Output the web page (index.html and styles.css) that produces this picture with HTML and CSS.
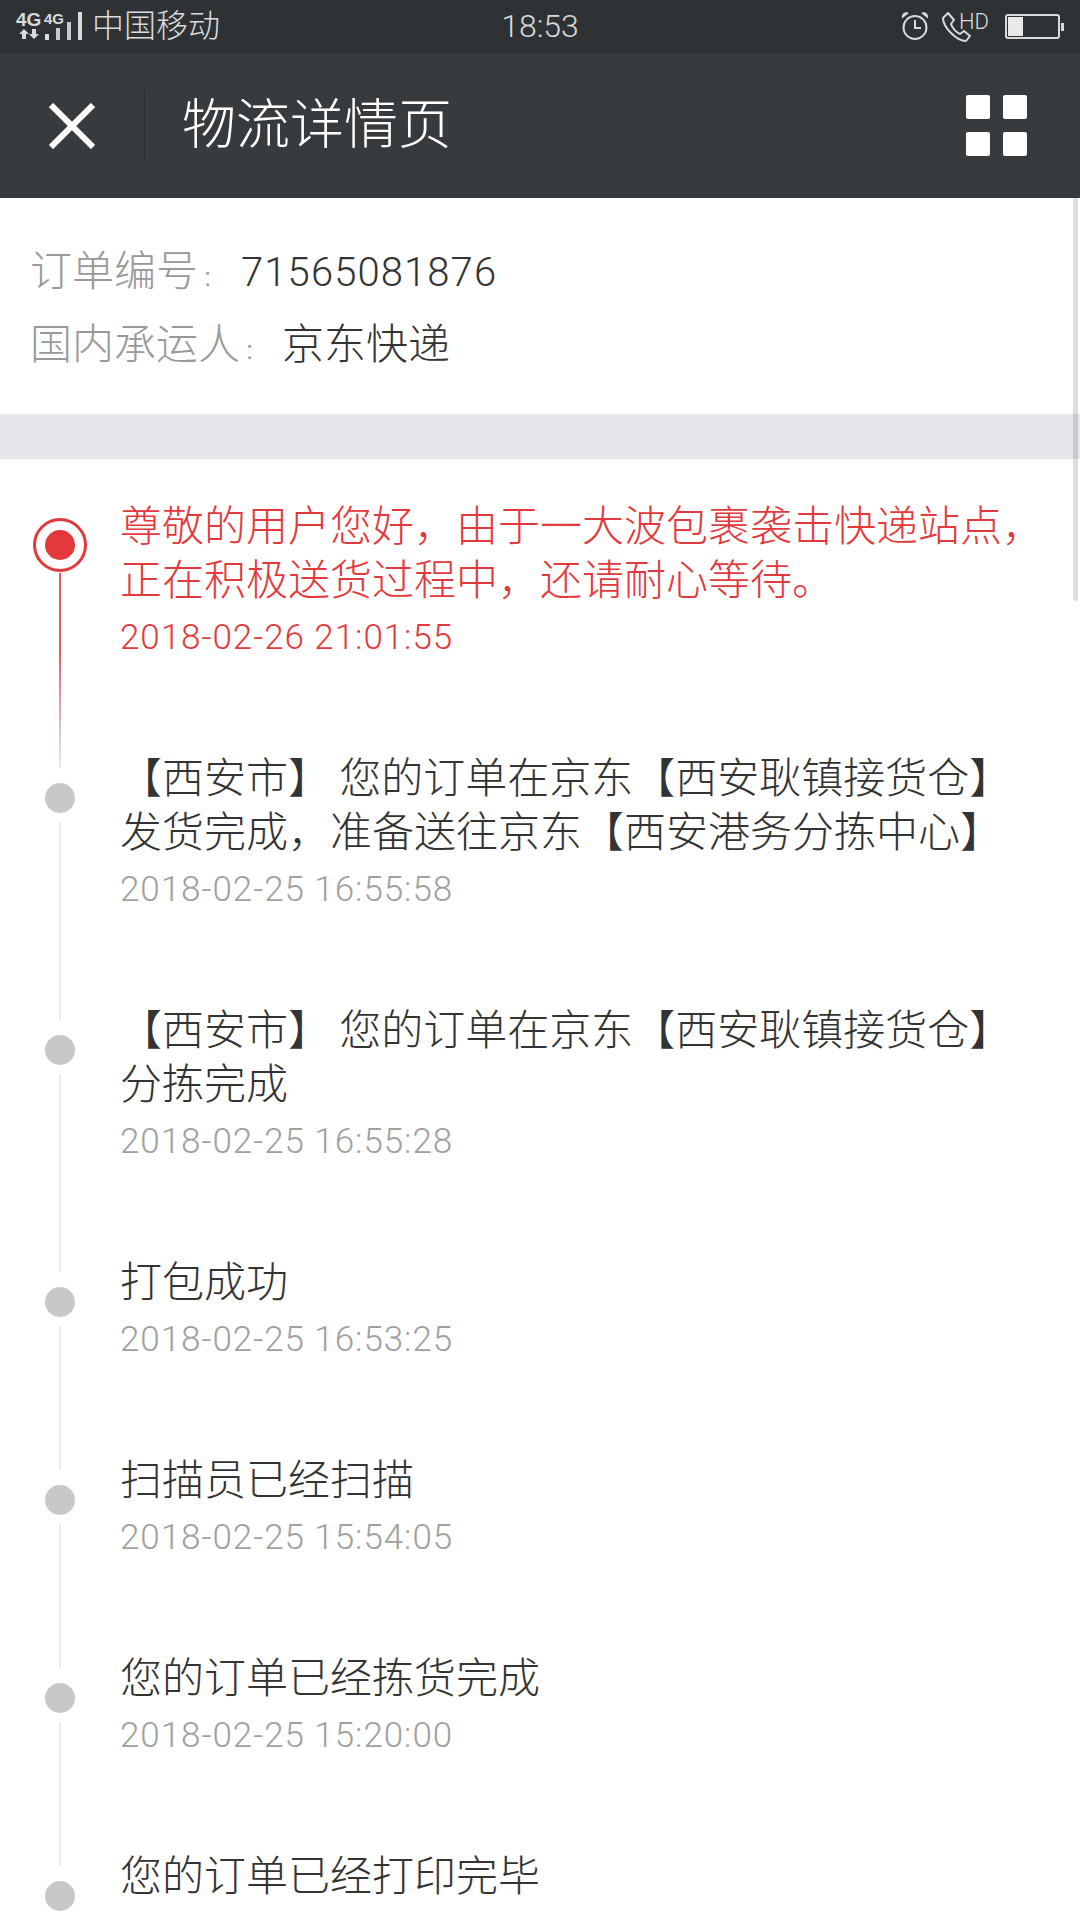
FILE: index.html
```html
<!DOCTYPE html>
<html lang="zh-CN">
<head>
<meta charset="utf-8">
<title>物流详情页</title>
<link rel="stylesheet" href="styles.css">
</head>
<body>
<div class="page">
  <header class="status">
    <div class="status-left">
      <div class="net">
        <span class="net-big">4G</span>
        <svg class="net-arrows" width="20" height="10" viewBox="0 0 20 10"><path d="M5 0l5 5H7v5H3V5H0zM15 10l-5-5h3V0h4v5h3z" fill="#d8dadc"/></svg>
      </div>
      <span class="net-small">4G</span>
      <div class="bars">
        <i class="bar bar-1"></i><i class="bar bar-2"></i><i class="bar bar-3"></i><i class="bar bar-4"></i>
      </div>
      <span class="carrier">中国移动</span>
    </div>
    <div class="time">18:53</div>
    <div class="status-right">
      <svg class="alarm" width="28" height="30" viewBox="0 0 28 30" fill="none" stroke="#d8dadc">
        <circle cx="14" cy="16.5" r="11.5" stroke-width="2"/>
        <path d="M14 9v8h6" stroke-width="2"/>
        <path d="M1 7.5C0 3 4 0 8 2zM27 7.5C28 3 24 0 20 2z" fill="#d8dadc" stroke="none"/>
      </svg>
      <div class="call">
        <svg width="30" height="30" viewBox="0 0 30 30" fill="none" stroke="#d8dadc" stroke-width="2" stroke-linejoin="round"><path d="M6 1L1 6c0 5 3 10 8 15s9 8 15 8l4-5-6-5-4 3c-3-1-8-6-9-10l3-4z"/></svg>
        <span class="hd">HD</span>
      </div>
      <div class="battery"><div class="battery-fill"></div></div>
      <div class="battery-tip"></div>
    </div>
  </header>

  <nav class="nav">
    <button class="close" aria-label="关闭">
      <svg width="46" height="46" viewBox="0 0 46 46"><path d="M2 2l42 42M44 2L2 44" stroke="#fff" stroke-width="6" fill="none"/></svg>
    </button>
    <div class="nav-divider"></div>
    <h1 class="title">物流详情页</h1>
    <div class="grid-icon"><i></i><i></i><i></i><i></i></div>
  </nav>

  <section class="info">
    <p class="info-row"><span class="label">订单编号<span class="colon">:</span></span><span class="value number">71565081876</span></p>
    <p class="info-row"><span class="label">国内承运人<span class="colon">:</span></span><span class="value">京东快递</span></p>
  </section>
  <div class="band"></div>

  <ol class="timeline">
    <li class="item item-current">
      <div class="rail"><div class="dot"></div><div class="line"></div></div>
      <div class="body">
        <p class="text">尊敬的用户您好，由于一大波包裹袭击快递站点，正在积极送货过程中，还请耐心等待。</p>
        <p class="date">2018-02-26 21:01:55</p>
      </div>
    </li>
    <li class="item">
      <div class="rail"><div class="dot"></div><div class="line"></div></div>
      <div class="body">
        <p class="text">【西安市】 您的订单在京东【西安耿镇接货仓】发货完成，准备送往京东【西安港务分拣中心】</p>
        <p class="date">2018-02-25 16:55:58</p>
      </div>
    </li>
    <li class="item">
      <div class="rail"><div class="dot"></div><div class="line"></div></div>
      <div class="body">
        <p class="text">【西安市】 您的订单在京东【西安耿镇接货仓】分拣完成</p>
        <p class="date">2018-02-25 16:55:28</p>
      </div>
    </li>
    <li class="item">
      <div class="rail"><div class="dot"></div><div class="line"></div></div>
      <div class="body">
        <p class="text">打包成功</p>
        <p class="date">2018-02-25 16:53:25</p>
      </div>
    </li>
    <li class="item">
      <div class="rail"><div class="dot"></div><div class="line"></div></div>
      <div class="body">
        <p class="text">扫描员已经扫描</p>
        <p class="date">2018-02-25 15:54:05</p>
      </div>
    </li>
    <li class="item">
      <div class="rail"><div class="dot"></div><div class="line"></div></div>
      <div class="body">
        <p class="text">您的订单已经拣货完成</p>
        <p class="date">2018-02-25 15:20:00</p>
      </div>
    </li>
    <li class="item">
      <div class="rail"><div class="dot"></div><div class="line"></div></div>
      <div class="body">
        <p class="text">您的订单已经打印完毕</p>
      </div>
    </li>
  </ol>
  <div class="scrollbar"></div>
</div>
</body>
</html>
```

FILE: styles.css
```css
* { box-sizing: border-box; }
html, body { margin: 0; padding: 0; }
body {
  font-family: "Noto Sans CJK SC", "Noto Sans", sans-serif;
  font-weight: 300;
  background: #fff;
  color: #333;
}
p, h1, ol { margin: 0; padding: 0; }
ol { list-style: none; }

.page {
  position: relative;
  width: 1080px;
  height: 1920px;
  overflow: hidden;
}

/* status bar */
.status {
  height: 53px;
  background: #2f3235;
  color: #d8dadc;
  display: grid;
  grid-template-columns: 1fr auto 1fr;
  align-items: center;
}
.status-left { display: flex; align-items: flex-start; padding: 12px 0 0 16px; height: 53px; }
.net { display: flex; flex-direction: column; width: 26px; }
.net-big { font: 700 19px/16px "Liberation Sans", sans-serif; }
.net-arrows { margin: 1px 0 0 3px; }
.net-small { font: 700 15px/14px "Liberation Sans", sans-serif; margin-left: 2px; }
.bars { display: flex; align-items: flex-end; gap: 7px; height: 28px; margin-left: -19px; }
.bar { display: block; width: 4px; background: #d8dadc; }
.bar-1 { height: 6px; }
.bar-2 { height: 12px; opacity: .9; }
.bar-3 { height: 18px; opacity: .9; }
.bar-4 { height: 28px; }
.carrier { font-size: 32px; line-height: 28px; margin: -3px 0 0 10px; }
.time { font: 300 32px/53px Roboto, sans-serif; }
.status-right { display: flex; align-items: center; justify-content: flex-end; padding-right: 16px; height: 53px; }
.alarm { margin-top: -2px; }
.call { position: relative; width: 44px; height: 30px; margin-left: 13px; }
.hd { position: absolute; left: 17px; top: -1px; font: 300 22px/22px Roboto, sans-serif; }
.battery {
  width: 55px;
  height: 25px;
  margin-left: 19px;
  border: 2px solid #d8dadc;
  border-radius: 3px;
  padding: 1px;
}
.battery-fill { width: 15px; height: 100%; background: #e8e9ea; }
.battery-tip { width: 3px; height: 8px; background: #d8dadc; margin-left: 1px; }

/* navigation */
.nav {
  height: 145px;
  background: #383b3e;
  display: flex;
  align-items: center;
  padding: 0 53px 0 49px;
  color: #fff;
}
.close { border: 0; padding: 0; background: none; width: 46px; height: 46px; display: block; }
.nav-divider { width: 1px; height: 72px; background: #2a2c2f; margin-left: 49px; }
.title { font-size: 54px; font-weight: 300; line-height: 72px; margin: 0 0 10px 37px; flex: 1; }
.grid-icon { display: grid; grid-template-columns: 24px 24px; grid-auto-rows: 24px; gap: 13px; }
.grid-icon i { display: block; background: #fff; border-radius: 2px; }

/* order info */
.info { height: 216px; padding: 33px 30px 0; }
.info-row { font-size: 42px; line-height: 73px; white-space: nowrap; }
.label { color: #999; }
.colon { display: inline-block; width: 42px; padding-left: 6px; font: 400 26px/1 "Liberation Sans", sans-serif; }
.value { color: #333; }
.number { font-family: Roboto, sans-serif; font-size: 40px; line-height: 1; font-weight: 300; letter-spacing: 1.1px; margin-left: 1px; }
.band { height: 45px; background: #e5e7ea; }

/* timeline */
.item { display: flex; }
.rail {
  width: 120px;
  flex: none;
  display: flex;
  flex-direction: column;
  align-items: center;
  margin-top: 72px;
  margin-bottom: -57px;
}
.dot { width: 30px; height: 30px; border-radius: 50%; background: #c8c8c8; flex: none; }
.line { width: 2px; flex: 1; margin-top: 9px; background: #ebebeb; }
.body { padding: 37px 30px 40px 0; width: 960px; }
.text { font-size: 42px; line-height: 54px; color: #333; }
.date { font: 300 35px/67px Roboto, sans-serif; letter-spacing: .95px; color: #a0a0a0; }

.item-current .rail { margin-top: 59px; }
.item-current .dot {
  width: 54px;
  height: 54px;
  background: #e4393c;
  border: 3px solid #e4393c;
  background-clip: content-box;
  padding: 9px;
}
.item-current .line {
  margin-top: 1px;
  background: linear-gradient(to bottom, #e65a5e 0%, #e65a5e 40%, #d8b0b4 72%, #ebebeb 100%);
}
.item-current .text, .item-current .date { color: #e4393c; }

.scrollbar {
  position: absolute;
  left: 1073px;
  top: 198px;
  width: 5px;
  height: 403px;
  background: rgba(120, 120, 130, .25);
  border-radius: 3px;
}
```
